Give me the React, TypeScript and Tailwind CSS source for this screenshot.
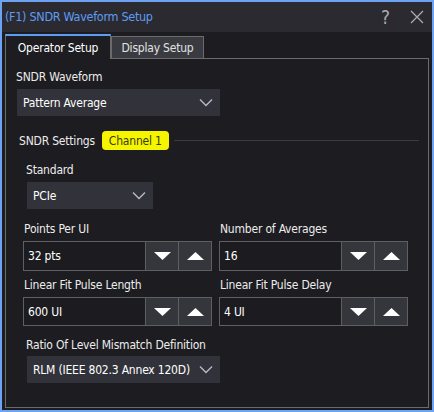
import React from "react";

const font = { fontFamily: '"DejaVu Sans Condensed", "DejaVu Sans", sans-serif' };

function Chevron() {
    return (
        <svg width="14" height="9" viewBox="0 0 14 9" className="ml-auto shrink-0">
            <path d="M1 1.5 L7 7.5 L13 1.5" fill="none" stroke="#b9bac0" strokeWidth="1.4" />
        </svg>
    );
}

function Dropdown({ value, className }: { value: string; className: string }) {
    return (
        <div className={`flex items-center bg-[#32333a] pl-[6px] pr-[7px] text-[12px] tracking-[-0.2px] text-white ${className}`}>
            <span>{value}</span>
            <Chevron />
        </div>
    );
}

function Triangle({ up }: { up?: boolean }) {
    return (
        <svg width="17" height="8" viewBox="0 0 17 8">
            <path d={up ? "M0 8 L8.5 0 L17 8 Z" : "M0 0 L17 0 L8.5 8 Z"} fill="#ffffff" />
        </svg>
    );
}

function SpinBox({ label, value, h }: { label: string; value: string; h: string }) {
    return (
        <div className="w-[189px] flex flex-col">
            <div className="h-[16px] leading-[16px] text-[12px] tracking-[-0.2px] text-[#ececec] pl-[1px]">{label}</div>
            <div className={`flex mt-[4px] ${h} border border-[#5e5f63]`}>
                <div className="flex-1 flex items-center pl-[4px] text-[12px] tracking-[-0.2px] text-white bg-[#1b1b20]">{value}</div>
                <button className="w-[33px] flex items-center justify-center bg-[#35363c] border-l border-[#5e5f63]">
                    <Triangle />
                </button>
                <button className="w-[33px] flex items-center justify-center bg-[#35363c] border-l border-[#5e5f63]">
                    <Triangle up />
                </button>
            </div>
        </div>
    );
}

export default function App() {
    return (
        <div style={font} className="w-[434px] h-[412px] border-2 border-[#6ea2f2] bg-[#1c1c21] flex flex-col">
            {/* Title bar */}
            <div className="h-[30px] bg-[#2a2a30] flex items-center pl-[3px] pr-[8px] shrink-0">
                <span className="text-[12.5px] tracking-[-0.3px] text-[#5e9cf3]">(F1) SNDR Waveform Setup</span>
                <span className="ml-auto text-[19px] font-light text-[#a9aaae] leading-none mr-[20px]">?</span>
                <svg width="14" height="14" viewBox="0 0 14 14">
                    <path d="M1 1 L13 13 M13 1 L1 13" stroke="#a9aaae" strokeWidth="1.3" />
                </svg>
            </div>

            {/* Body */}
            <div className="flex-1 flex flex-col px-[3px] pt-[2px] pb-[2px]">
                <div className="flex items-end h-[24px] shrink-0">
                    <div className="relative z-10 -mb-px w-[106px] h-[25px] bg-[#1c1c21] border-t-2 border-t-[#5e9cf3] border-x border-x-[#6b6b6e] flex items-center justify-center text-[12px] tracking-[-0.2px] text-white">
                        Operator Setup
                    </div>
                    <div className="w-[93px] h-[22px] bg-[#3a3b41] border border-[#6b6b6e] border-b-0 flex items-center justify-center text-[12px] tracking-[-0.2px] text-[#e2e2e2]">
                        Display Setup
                    </div>
                </div>

                <div className="flex-1 border border-[#6b6b6e] flex flex-col">
                    <div className="mt-[10px] ml-[10px] h-[16px] leading-[16px] text-[12px] tracking-[-0.2px] text-[#ececec]">SNDR Waveform</div>
                    <Dropdown value="Pattern Average" className="mt-[4px] ml-[11px] w-[203px] h-[27px]" />

                    <div className="mt-[15px] ml-[13px] mr-[9px] h-[19px] flex items-center">
                        <span className="text-[12px] tracking-[-0.2px] text-[#ececec]">SNDR Settings</span>
                        <span className="ml-[7px] h-[19px] px-[7px] rounded-[4px] bg-[#f5f500] text-[12px] tracking-[-0.2px] text-[#3b3b10] flex items-center">
                            Channel 1
                        </span>
                        <div className="flex-1 ml-[5px] h-px bg-[#3c3d42]" />
                    </div>

                    <div className="mt-[12px] ml-[20px] h-[16px] leading-[16px] text-[12px] tracking-[-0.2px] text-[#ececec]">Standard</div>
                    <Dropdown value="PCIe" className="mt-[4px] ml-[21px] w-[126px] h-[27px]" />

                    <div className="mt-[12px] ml-[17px] flex gap-[7px]">
                        <SpinBox label="Points Per UI" value="32 pts" h="h-[30px]" />
                        <SpinBox label="Number of Averages" value="16" h="h-[30px]" />
                    </div>

                    <div className="mt-[6px] ml-[17px] flex gap-[7px]">
                        <SpinBox label="Linear Fit Pulse Length" value="600 UI" h="h-[29px]" />
                        <SpinBox label="Linear Fit Pulse Delay" value="4 UI" h="h-[29px]" />
                    </div>

                    <div className="mt-[11px] ml-[20px] h-[16px] leading-[16px] text-[12px] tracking-[-0.2px] text-[#ececec]">
                        Ratio Of Level Mismatch Definition
                    </div>
                    <Dropdown value="RLM (IEEE 802.3 Annex 120D)" className="mt-[3px] ml-[21px] w-[193px] h-[27px]" />
                </div>
            </div>
        </div>
    );
}
